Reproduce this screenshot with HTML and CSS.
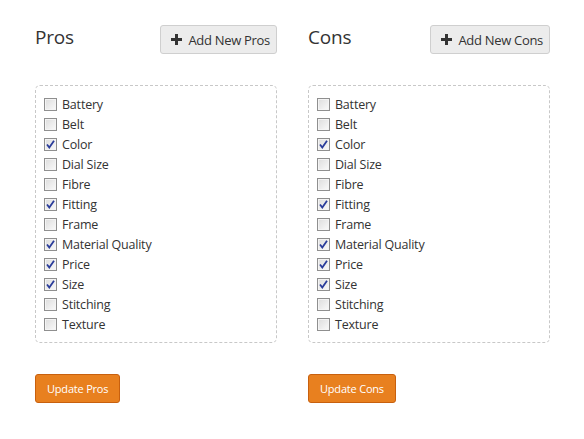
FILE: index.html
```html
<!DOCTYPE html>
<html>
<head>
<meta charset="utf-8">
<link rel="stylesheet" href="styles.css">
</head>
<body>
<div class="page">
  <section class="col">
    <div class="head">
      <h2 class="title">Pros</h2>
      <button class="add"><svg class="plus" width="11" height="11" viewBox="0 0 11 11"><path d="M4 0h3v4h4v3H7v4H4V7H0V4h4z" fill="#333"/></svg>Add New Pros</button>
    </div>
    <div class="box">
      <label class="row"><span class="cb"></span>Battery</label>
      <label class="row"><span class="cb"></span>Belt</label>
      <label class="row"><span class="cb on"><svg width="9" height="9" viewBox="0 0 9 9"><path d="M1 4.5l2.3 3L8 0.8" fill="none" stroke="#2a3c9a" stroke-width="1.8"/></svg></span>Color</label>
      <label class="row"><span class="cb"></span>Dial Size</label>
      <label class="row"><span class="cb"></span>Fibre</label>
      <label class="row"><span class="cb on"><svg width="9" height="9" viewBox="0 0 9 9"><path d="M1 4.5l2.3 3L8 0.8" fill="none" stroke="#2a3c9a" stroke-width="1.8"/></svg></span>Fitting</label>
      <label class="row"><span class="cb"></span>Frame</label>
      <label class="row"><span class="cb on"><svg width="9" height="9" viewBox="0 0 9 9"><path d="M1 4.5l2.3 3L8 0.8" fill="none" stroke="#2a3c9a" stroke-width="1.8"/></svg></span>Material Quality</label>
      <label class="row"><span class="cb on"><svg width="9" height="9" viewBox="0 0 9 9"><path d="M1 4.5l2.3 3L8 0.8" fill="none" stroke="#2a3c9a" stroke-width="1.8"/></svg></span>Price</label>
      <label class="row"><span class="cb on"><svg width="9" height="9" viewBox="0 0 9 9"><path d="M1 4.5l2.3 3L8 0.8" fill="none" stroke="#2a3c9a" stroke-width="1.8"/></svg></span>Size</label>
      <label class="row"><span class="cb"></span>Stitching</label>
      <label class="row"><span class="cb"></span>Texture</label>
    </div>
    <button class="update">Update Pros</button>
  </section>
  <section class="col">
    <div class="head">
      <h2 class="title">Cons</h2>
      <button class="add"><svg class="plus" width="11" height="11" viewBox="0 0 11 11"><path d="M4 0h3v4h4v3H7v4H4V7H0V4h4z" fill="#333"/></svg>Add New Cons</button>
    </div>
    <div class="box">
      <label class="row"><span class="cb"></span>Battery</label>
      <label class="row"><span class="cb"></span>Belt</label>
      <label class="row"><span class="cb on"><svg width="9" height="9" viewBox="0 0 9 9"><path d="M1 4.5l2.3 3L8 0.8" fill="none" stroke="#2a3c9a" stroke-width="1.8"/></svg></span>Color</label>
      <label class="row"><span class="cb"></span>Dial Size</label>
      <label class="row"><span class="cb"></span>Fibre</label>
      <label class="row"><span class="cb on"><svg width="9" height="9" viewBox="0 0 9 9"><path d="M1 4.5l2.3 3L8 0.8" fill="none" stroke="#2a3c9a" stroke-width="1.8"/></svg></span>Fitting</label>
      <label class="row"><span class="cb"></span>Frame</label>
      <label class="row"><span class="cb on"><svg width="9" height="9" viewBox="0 0 9 9"><path d="M1 4.5l2.3 3L8 0.8" fill="none" stroke="#2a3c9a" stroke-width="1.8"/></svg></span>Material Quality</label>
      <label class="row"><span class="cb on"><svg width="9" height="9" viewBox="0 0 9 9"><path d="M1 4.5l2.3 3L8 0.8" fill="none" stroke="#2a3c9a" stroke-width="1.8"/></svg></span>Price</label>
      <label class="row"><span class="cb on"><svg width="9" height="9" viewBox="0 0 9 9"><path d="M1 4.5l2.3 3L8 0.8" fill="none" stroke="#2a3c9a" stroke-width="1.8"/></svg></span>Size</label>
      <label class="row"><span class="cb"></span>Stitching</label>
      <label class="row"><span class="cb"></span>Texture</label>
    </div>
    <button class="update">Update Cons</button>
  </section>
</div>
</body>
</html>
```
FILE: styles.css
```css
* { box-sizing: border-box; }
body {
  margin: 0;
  background: #fff;
  font-family: "Open Sans", "Liberation Sans", sans-serif;
  color: #333;
}
.page {
  display: flex;
  gap: 31px;
  padding: 25px 0 0 35px;
}
.col {
  width: 242px;
  display: flex;
  flex-direction: column;
  align-items: flex-start;
}
.head {
  width: 100%;
  height: 29px;
  display: flex;
  justify-content: space-between;
  align-items: center;
}
.title {
  margin: 0 0 6px 0;
  font-size: 19px;
  font-weight: 400;
  color: #333;
  letter-spacing: -0.2px;
}
.add {
  height: 29px;
  padding: 0 6px 0 10px;
  display: flex;
  align-items: center;
  gap: 6px;
  font-family: inherit;
  font-size: 13px;
  color: #333;
  background: #ececec;
  border: 1px solid #cfcfcf;
  border-radius: 3px;
  letter-spacing: -0.3px;
}
.plus { flex: none; }
.box {
  margin-top: 31px;
  width: 100%;
  height: 258px;
  border: 1px dashed #c8c8c8;
  border-radius: 5px;
  padding: 8px 8px;
}
.row {
  display: flex;
  align-items: center;
  height: 20px;
  font-size: 12.5px;
  color: #333;
  letter-spacing: -0.2px;
}
.cb {
  width: 13px;
  height: 13px;
  margin-right: 5px;
  flex: none;
  border: 1px solid #8f8f8f;
  background: linear-gradient(135deg, #dcdcdc, #fafafa);
  box-shadow: inset 0 0 0 1px #f4f4f4;
  display: flex;
  align-items: center;
  justify-content: center;
}
.update {
  margin-top: 31px;
  height: 29px;
  padding: 0 11px;
  font-family: inherit;
  font-size: 11px;
  color: #fff;
  background: #e8801f;
  border: 1px solid #c8600e;
  border-radius: 3px;
  letter-spacing: -0.2px;
}
```
